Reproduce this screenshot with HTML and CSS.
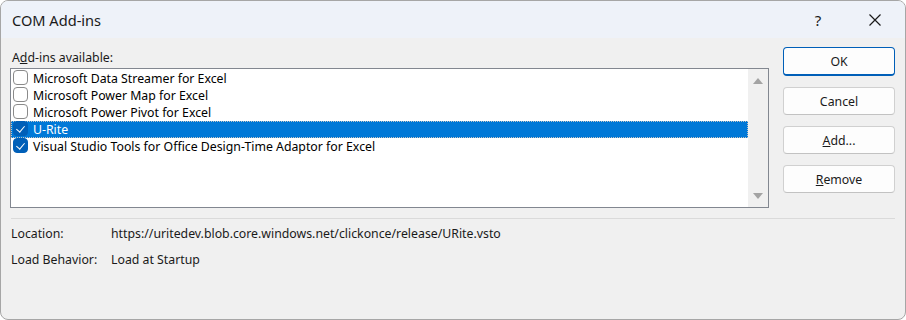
FILE: index.html
```html
<!DOCTYPE html>
<html lang="en">
  <head>
    <meta charset="UTF-8" />
    <title>COM Add-ins</title>
    <link rel="stylesheet" href="styles.css">
  </head>
  <body>
    <div class="window">
      <!-- Title bar -->
      <div class="title-bar">
        <span class="title">COM Add-ins</span>
        <span class="help">?</span>
        <span class="close">
          <svg width="14" height="14" viewBox="0 0 14 14">
            <path d="M1.5 1.5 L12.5 12.5 M12.5 1.5 L1.5 12.5" stroke="#1a1a1a" stroke-width="1.2" fill="none" />
          </svg>
        </span>
      </div>

      <div class="content">
        <div class="main">
          <div class="left">
            <div class="label">A<u>d</u>d-ins available:</div>
            <div class="listbox">
              <ul class="items">
                <li><span class="check"></span>Microsoft Data Streamer for Excel</li>
                <li><span class="check"></span>Microsoft Power Map for Excel</li>
                <li><span class="check"></span>Microsoft Power Pivot for Excel</li>
                <li class="selected"><span class="check on"></span>U-Rite</li>
                <li><span class="check on"></span>Visual Studio Tools for Office Design-Time Adaptor for Excel</li>
              </ul>
              <div class="scrollbar">
                <span class="arrow up"></span>
                <span class="arrow down"></span>
              </div>
            </div>
          </div>

          <div class="buttons">
            <button class="btn default">OK</button>
            <button class="btn">Cancel</button>
            <button class="btn"><u>A</u>dd...</button>
            <button class="btn"><u>R</u>emove</button>
          </div>
        </div>

        <div class="separator"></div>

        <div class="info">
          <span>Location:</span>
          <span>https://uritedev.blob.core.windows.net/clickonce/release/URite.vsto</span>
          <span>Load Behavior:</span>
          <span>Load at Startup</span>
        </div>
      </div>
    </div>
  </body>
</html>
```

FILE: styles.css
```css
* {
  box-sizing: border-box;
  margin: 0;
  padding: 0;
}

html,
body {
  width: 906px;
  height: 320px;
  background: #ffffff;
  font-family: "Noto Sans", "Open Sans", sans-serif;
  font-size: 12.3px;
  color: #000;
  overflow: hidden;
}

.window {
  width: 906px;
  height: 320px;
  display: flex;
  flex-direction: column;
  background: #f0f0f0;
  border: 1px solid #a6a6a6;
  border-radius: 8px;
  overflow: hidden;
}

/* Title bar */
.title-bar {
  height: 37px;
  flex-shrink: 0;
  display: flex;
  align-items: center;
  background: #eef2f9;
  padding-left: 11px;
}

.title {
  font-size: 14.6px;
  flex: 1;
  color: #1a1a1a;
}

.help {
  font-size: 15px;
  width: 20px;
  text-align: center;
  margin-right: 40px;
  color: #1a1a1a;
}

.close {
  width: 14px;
  height: 14px;
  margin-right: 23px;
  display: flex;
}

/* Contents */
.content {
  flex: 1;
  padding: 0 10px 0 9px;
  display: flex;
  flex-direction: column;
}

.main {
  display: flex;
  gap: 14px;
}

.left {
  width: 760px;
  display: flex;
  flex-direction: column;
}

.label {
  height: 30px;
  padding-top: 12px;
  padding-left: 2px;
  line-height: 15px;
  color: #1a1a1a;
}

.listbox {
  height: 140px;
  background: #fff;
  border: 1px solid #828790;
  display: flex;
}

.items {
  list-style: none;
  flex: 1;
  padding-top: 1px;
}

.items li {
  height: 17px;
  display: flex;
  align-items: center;
  padding-left: 2px;
  line-height: 17px;
  white-space: nowrap;
}

.items li.selected {
  background: #0078d7;
  color: #fff;
  outline: 1px dotted #c4c4c4;
  outline-offset: -1px;
}

.check {
  width: 15px;
  height: 15px;
  margin-right: 5px;
  border: 1px solid #8a8a8a;
  border-radius: 4px;
  background: #fff;
  align-self: flex-start;
  position: relative;
}

.check.on {
  background: #005fb8;
  border-color: #005fb8;
}

.check.on::after {
  content: "";
  position: absolute;
  left: 4px;
  top: 2px;
  width: 4px;
  height: 7px;
  border: solid #fff;
  border-width: 0 1.4px 1.4px 0;
  transform: rotate(40deg);
}

.scrollbar {
  width: 20px;
  background: #f0f0f0;
  display: flex;
  flex-direction: column;
  justify-content: space-between;
  align-items: center;
  padding: 9px 0 8px;
}

.arrow {
  width: 0;
  height: 0;
  border-left: 5px solid transparent;
  border-right: 5px solid transparent;
}

.arrow.up {
  border-bottom: 6px solid #a3a3a3;
}

.arrow.down {
  border-top: 6px solid #a3a3a3;
}

/* Buttons */
.buttons {
  padding-top: 9px;
  display: flex;
  flex-direction: column;
  gap: 11px;
}

.btn {
  width: 112px;
  height: 28px;
  font-family: inherit;
  font-size: 12.3px;
  color: #1a1a1a;
  background: #fdfdfd;
  border: 1px solid #d0d0d0;
  border-bottom-color: #c2c2c2;
  border-radius: 4px;
}

.btn.default {
  height: 29px;
  border: 1px solid #005fb8;
  border-bottom-width: 2px;
}

.separator {
  height: 1px;
  background: #dadada;
  margin: 10px 0 0 1px;
}

.info {
  display: grid;
  grid-template-columns: 100px auto;
  row-gap: 9px;
  padding: 6px 0 0 1px;
  line-height: 17px;
  color: #1a1a1a;
}
```
